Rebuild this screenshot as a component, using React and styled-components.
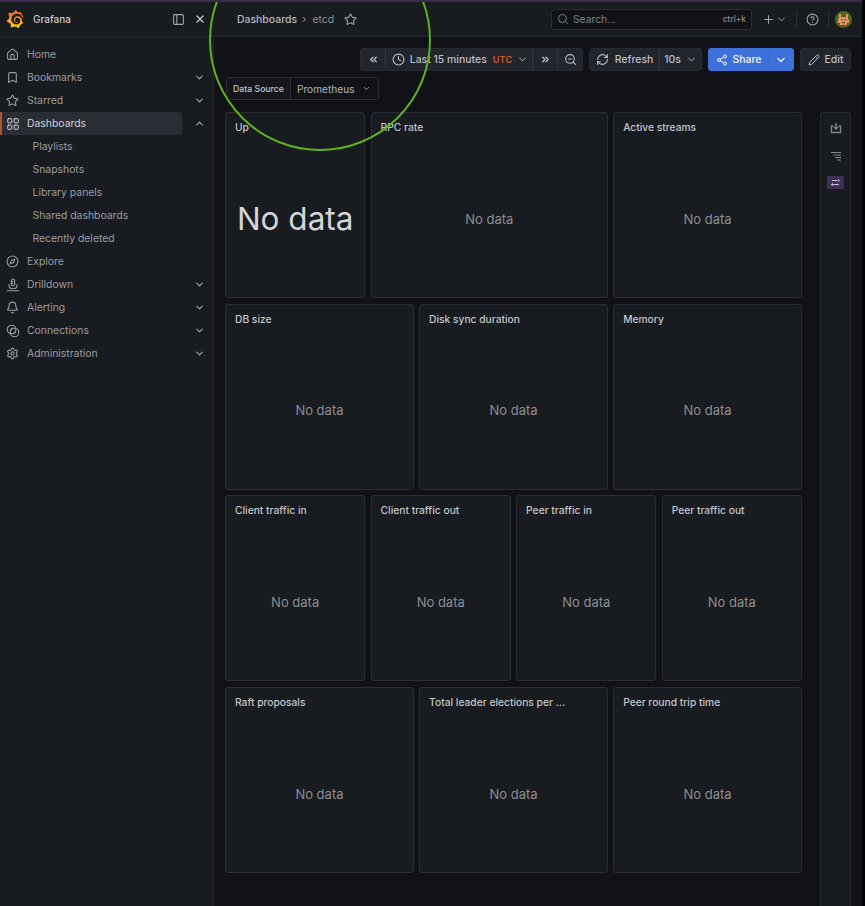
import React from "react";
import styled, { createGlobalStyle } from "styled-components";
import {
  Home, Bookmark, Star, LayoutGrid, Compass, Bell, Settings, ChevronDown, ChevronUp, X, PanelLeft,
  Search, Plus, CircleHelp, ChevronsLeft, ChevronsRight, Clock, ZoomOut, RefreshCw, Share2, Pencil,
} from "lucide-react";
import { SiGrafana } from "react-icons/si";

const Global = createGlobalStyle`
  html, body { margin: 0; padding: 0; background: #000; }
  * { box-sizing: border-box; }
  body { font-family: Inter, "Noto Sans", sans-serif; }
`;

const Page = styled.div`
  position: relative;
  width: 862px;
  height: 906px;
  overflow: hidden;
  display: flex;
  flex-direction: column;
  background: #111217;
  border-top: 2px solid #3a2a4d;
`;
const Top = styled.header`
  display: flex;
  height: 35px;
  flex: none;
  background: #181b1f;
  border-bottom: 1px solid #24272c;
`;
const Brand = styled.div`
  width: 214px;
  flex: none;
  display: flex;
  align-items: center;
  padding: 0 8px 0 6px;
  color: #ccccdc;
`;
const BrandName = styled.span`
  font-size: 10px;
  font-weight: 500;
  margin-left: 9px;
  flex: 1;
  color: #c9cad0;
`;
const IconSlot = styled.span`
  display: inline-flex;
  align-items: center;
  justify-content: center;
  flex: none;
  color: ${(p) => p.$color || "#a3a5ab"};
  margin-left: ${(p) => p.$ml || 0}px;
`;
const Crumbs = styled.div`
  flex: 1;
  display: flex;
  align-items: center;
  padding-left: 23px;
  font-size: 10.45px;
  font-weight: 500;
  color: #b6b8be;
`;
const CrumbSep = styled.span`
  margin: 0 6px 0 5px;
  color: #7e8087;
  font-size: 11px;
`;
const CrumbMuted = styled.span`
  color: #8d8f96;
  font-weight: 400;
`;
const SearchBox = styled.div`
  width: 201px;
  height: 21px;
  display: flex;
  align-items: center;
  padding: 0 5px;
  gap: 4px;
  border-radius: 3px;
  background: #111217;
  border: 1px solid #2a2d33;
  color: #7f8188;
  font-size: 10.3px;
`;
const SearchText = styled.span`
  flex: 1;
`;
const Kbd = styled.span`
  font-size: 8.3px;
  font-weight: 500;
  color: #8a8c93;
`;
const TopRight = styled.div`
  display: flex;
  align-items: center;
  padding-right: 10px;
`;
const VBar = styled.span`
  width: 1px;
  height: 17px;
  background: #2a2d33;
  margin: ${(p) => p.$m};
`;
const Body = styled.div`
  flex: 1;
  display: flex;
  min-height: 0;
`;
const Sidebar = styled.nav`
  width: 214px;
  flex: none;
  background: #181b1f;
  border-right: 1px solid #25282d;
  padding-top: 6px;
`;
const NavRow = styled.div`
  height: 23px;
  display: flex;
  align-items: center;
  font-size: 10.4px;
  color: ${(p) => (p.$active ? "#d0d1d6" : "#9a9ca3")};
`;
const NavPill = styled.div`
  width: 182px;
  height: 100%;
  flex: none;
  display: flex;
  align-items: center;
  padding-left: ${(p) => (p.$child ? 30.5 : 3.5)}px;
  border-radius: 0 3px 3px 0;
  background: ${(p) => (p.$active ? "#2a2d33" : "transparent")};
  border-left: 2px solid ${(p) => (p.$active ? "#b3522b" : "transparent")};
`;
const NavIcon = styled.span`
  width: 14px;
  margin-right: 7.5px;
  display: inline-flex;
  justify-content: center;
`;
const Chevron = styled.span`
  margin-left: 12px;
  display: inline-flex;
  color: #a3a5ab;
`;
const Main = styled.main`
  flex: 1;
  min-width: 0;
  display: flex;
  flex-direction: column;
`;
const Toolbar = styled.div`
  display: flex;
  justify-content: flex-end;
  gap: 6px;
  padding: 11px 11px 0 0;
  height: 34px;
  flex: none;
`;
const Group = styled.div`
  display: flex;
  height: 23px;
  border-radius: 3px;
  overflow: hidden;
  background: ${(p) => (p.$primary ? "#3d71d9" : "#22252b")};
  border: 1px solid ${(p) => (p.$primary ? "#3d71d9" : "#26292f")};
  color: ${(p) => (p.$primary ? "#f2f4f8" : "#bcbec4")};
  font-size: 10.45px;
  font-weight: 500;
  > * + * {
    border-left: 1px solid ${(p) => (p.$primary ? "#3a6acc" : "#33363c")};
  }
`;
const Seg = styled.div`
  width: ${(p) => p.$w}px;
  display: flex;
  align-items: center;
  justify-content: center;
  gap: ${(p) => p.$gap || 0}px;
  padding-left: ${(p) => p.$pl || 0}px;
`;
const Utc = styled.span`
  color: #cb5d1b;
  font-size: 9px;
  font-weight: 600;
  letter-spacing: 0.2px;
  margin-left: 1px;
`;
const VarRow = styled.div`
  height: 41px;
  flex: none;
  padding: 6px 0 0 12px;
  display: flex;
  align-items: flex-start;
`;
const VarBox = styled.div`
  width: 153px;
  height: 23px;
  display: flex;
  border: 1px solid #2a2d33;
  border-radius: 3px;
  background: #111217;
`;
const VarLabel = styled.div`
  width: 64px;
  font-size: 8.7px;
  font-weight: 500;
  color: #c4c5ca;
  background: #15171c;
  display: flex;
  align-items: center;
  justify-content: center;
  border-right: 1px solid #2a2d33;
  border-radius: 3px 0 0 3px;
`;
const VarValue = styled.div`
  flex: 1;
  font-size: 10.15px;
  color: #b3b5bb;
  display: flex;
  align-items: center;
  padding-left: 6px;
  gap: 7px;
`;
const Content = styled.div`
  flex: 1;
  display: flex;
  padding-left: 11px;
  min-height: 0;
`;
const PanelGrid = styled.div`
  width: 577px;
  flex: none;
  display: grid;
  grid-template-columns: repeat(24, 1fr);
  grid-auto-rows: 186px;
  column-gap: 5.2px;
  row-gap: 5.7px;
  align-content: start;
`;
const Panel = styled.section`
  grid-column: span ${(p) => p.$span};
  display: flex;
  flex-direction: column;
  background: #181b1f;
  border: 1px solid #2b2e34;
  border-radius: 3px;
`;
const PanelTitle = styled.h3`
  margin: 0;
  padding: 7px 9px 0;
  font-size: 10.25px;
  line-height: 14px;
  font-weight: 500;
  color: #c4c5cb;
  white-space: nowrap;
  overflow: hidden;
`;
const NoData = styled.div`
  flex: 1;
  display: flex;
  align-items: center;
  justify-content: center;
  padding-top: 6px;
  font-size: ${(p) => (p.$big ? 31.5 : 13)}px;
  color: ${(p) => (p.$big ? "#d3d4d8" : "#8b8d94")};
`;
const Rail = styled.aside`
  width: 31px;
  flex: none;
  margin-left: 18px;
  background: #181b1f;
  border: 1px solid #26292f;
  border-bottom: none;
  border-radius: 3px 3px 0 0;
  display: flex;
  flex-direction: column;
  align-items: center;
  padding-top: 9px;
  gap: 17px;
`;
const RailActive = styled.span`
  width: 17px;
  height: 13px;
  border-radius: 2px;
  background: #3e2f54;
  display: flex;
  align-items: center;
  justify-content: center;
  color: #c9bcd9;
  margin-top: -2px;
`;
const Ring = styled.div`
  position: absolute;
  left: 209px;
  top: -73px;
  width: 222px;
  height: 222px;
  border: 2px solid #5db31e;
  border-radius: 50%;
  pointer-events: none;
`;

const Drill = () => (
  <svg width="14" height="14" viewBox="0 0 14 14" fill="none" stroke="currentColor" strokeWidth="1.1" strokeLinecap="round">
    <rect x="5.4" y="1" width="3.2" height="7" rx="1.6" />
    <path d="M5.4 3.5h1.4M5.4 5.5h1.4" />
    <path d="M3 6.5v1.2A4 3 0 0 0 11 7.7V6.5" />
    <path d="M1.5 12.8h11" />
  </svg>
);
const Conn = () => (
  <svg width="14" height="14" viewBox="0 0 14 14" fill="none" stroke="currentColor" strokeWidth="1.1">
    <circle cx="5.5" cy="5.5" r="4.3" />
    <circle cx="8.5" cy="8.5" r="4.3" />
    <path d="M4 6.5l2.5-2.5M7.5 10l2.5-2.5" />
  </svg>
);
const Logo = () => (
  <svg width="18" height="18" viewBox="0 0 24 24">
    <defs>
      <linearGradient id="gf" x1="0.5" y1="1" x2="0.5" y2="0">
        <stop offset="0" stopColor="#fcd01f" />
        <stop offset="0.6" stopColor="#f58a1f" />
        <stop offset="1" stopColor="#ef5a28" />
      </linearGradient>
    </defs>
    <SiGrafana x="0" y="0" size={24} style={{ fill: "url(#gf)" }} />
  </svg>
);
const Avatar = () => (
  <svg width="17" height="17" viewBox="0 0 17 17">
    <circle cx="8.5" cy="8.5" r="8.5" fill="#4d6a14" />
    <path d="M4 3h2v3h5V3h2v5h1v4h-2v2H5v-2H3V8h1z" fill="#ec8a6e" />
    <rect x="6" y="8" width="1.5" height="1.5" fill="#4d6a14" />
    <rect x="9.5" y="8" width="1.5" height="1.5" fill="#4d6a14" />
    <rect x="7" y="11" width="3" height="1.3" fill="#4d6a14" />
  </svg>
);
const RailDownload = () => (
  <svg width="12" height="12" viewBox="0 0 12 12" fill="none" stroke="#85878d" strokeWidth="1.3">
    <path d="M3.5 4H1.5v6.5h9V4H8.5" />
    <path d="M6 1v5.5M4 5l2 2 2-2" />
  </svg>
);
const RailList = () => (
  <svg width="12" height="10" viewBox="0 0 12 10" stroke="#85878d" strokeWidth="1.1">
    <path d="M1 1.5h10M3.5 4h7.5M5 6.5h6M7 9h4" />
  </svg>
);
const RailSwap = () => (
  <svg width="11" height="8" viewBox="0 0 11 8" fill="none" stroke="currentColor" strokeWidth="1">
    <path d="M1 5.5h8M7.5 1.5H2M8 .5l1.5 1-1.5 1M3 4.5L1.5 5.5 3 6.5" />
  </svg>
);

const nav = [
  { label: "Home", icon: <Home size={13} /> },
  { label: "Bookmarks", icon: <Bookmark size={13} />, chev: "down" },
  { label: "Starred", icon: <Star size={13} />, chev: "down" },
  { label: "Dashboards", icon: <LayoutGrid size={14} strokeWidth={1.7} />, chev: "up", active: true },
  { label: "Playlists", child: true },
  { label: "Snapshots", child: true },
  { label: "Library panels", child: true },
  { label: "Shared dashboards", child: true },
  { label: "Recently deleted", child: true },
  { label: "Explore", icon: <Compass size={13} /> },
  { label: "Drilldown", icon: <Drill />, chev: "down" },
  { label: "Alerting", icon: <Bell size={13} />, chev: "down" },
  { label: "Connections", icon: <Conn />, chev: "down" },
  { label: "Administration", icon: <Settings size={13} />, chev: "down" },
];

const panels = [
  ["Up", 6, true], ["RPC rate", 10], ["Active streams", 8],
  ["DB size", 8], ["Disk sync duration", 8], ["Memory", 8],
  ["Client traffic in", 6], ["Client traffic out", 6], ["Peer traffic in", 6], ["Peer traffic out", 6],
  ["Raft proposals", 8], ["Total leader elections per ...", 8], ["Peer round trip time", 8],
];

export default function App() {
  return (
    <>
      <Global />
      <Page>
        <Top>
          <Brand>
            <Logo />
            <BrandName>Grafana</BrandName>
            <IconSlot><PanelLeft size={13} /></IconSlot>
            <IconSlot $ml={9} $color="#c8c9ce"><X size={12} strokeWidth={2.4} /></IconSlot>
          </Brand>
          <Crumbs>
            Dashboards
            <CrumbSep>›</CrumbSep>
            <CrumbMuted>etcd</CrumbMuted>
            <IconSlot $ml={10}><Star size={13} /></IconSlot>
          </Crumbs>
          <TopRight>
            <SearchBox>
              <Search size={12} />
              <SearchText>Search...</SearchText>
              <Kbd>ctrl+k</Kbd>
            </SearchBox>
            <IconSlot $ml={10}><Plus size={13} /></IconSlot>
            <IconSlot $ml={1}><ChevronDown size={11} /></IconSlot>
            <VBar $m="0 9px 0 9px" />
            <IconSlot><CircleHelp size={13} /></IconSlot>
            <VBar $m="0 6px 0 9px" />
            <Avatar />
          </TopRight>
        </Top>
        <Body>
          <Sidebar>
            {nav.map((n) => (
              <NavRow key={n.label} $active={n.active}>
                <NavPill $active={n.active} $child={n.child}>
                  {n.icon && <NavIcon>{n.icon}</NavIcon>}
                  {n.label}
                </NavPill>
                {n.chev && (
                  <Chevron>
                    {n.chev === "up" ? <ChevronUp size={11} strokeWidth={2.4} /> : <ChevronDown size={11} strokeWidth={2.4} />}
                  </Chevron>
                )}
              </NavRow>
            ))}
          </Sidebar>
          <Main>
            <Toolbar>
              <Group>
                <Seg $w={24}><ChevronsLeft size={11} strokeWidth={2.8} /></Seg>
                <Seg $w={147} $gap={5} $pl={2}>
                  <Clock size={13} />
                  <span>Last 15 minutes</span>
                  <Utc>UTC</Utc>
                  <ChevronDown size={11} />
                </Seg>
                <Seg $w={25}><ChevronsRight size={11} strokeWidth={2.8} /></Seg>
                <Seg $w={25}><ZoomOut size={13} /></Seg>
              </Group>
              <Group>
                <Seg $w={69} $gap={6}><RefreshCw size={13} />Refresh</Seg>
                <Seg $w={42} $gap={5}>10s<ChevronDown size={11} /></Seg>
              </Group>
              <Group $primary>
                <Seg $w={59} $gap={5}><Share2 size={12} />Share</Seg>
                <Seg $w={25}><ChevronDown size={12} strokeWidth={2.4} /></Seg>
              </Group>
              <Group>
                <Seg $w={49} $gap={5}><Pencil size={12} />Edit</Seg>
              </Group>
            </Toolbar>
            <VarRow>
              <VarBox>
                <VarLabel>Data Source</VarLabel>
                <VarValue>Prometheus<ChevronDown size={9} /></VarValue>
              </VarBox>
            </VarRow>
            <Content>
              <PanelGrid>
                {panels.map(([title, span, big]) => (
                  <Panel key={title} $span={span}>
                    <PanelTitle>{title}</PanelTitle>
                    <NoData $big={big}>No data</NoData>
                  </Panel>
                ))}
              </PanelGrid>
              <Rail>
                <RailDownload />
                <RailList />
                <RailActive><RailSwap /></RailActive>
              </Rail>
            </Content>
          </Main>
        </Body>
        <Ring />
      </Page>
    </>
  );
}
